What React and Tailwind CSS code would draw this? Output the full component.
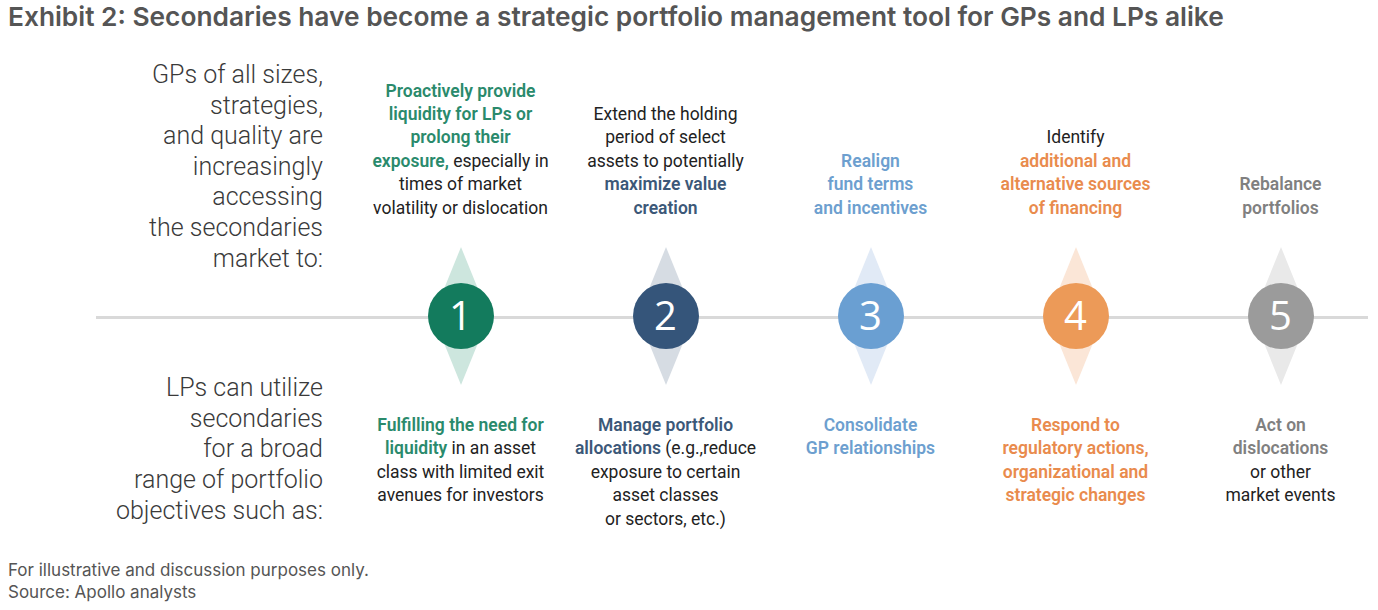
const steps = [
  {
    n: "1",
    circle: "bg-[#137b5d]",
    diamond: "#cde6de",
    top: (
      <>
        <span className="font-semibold text-[#2a8a6c]">
          Proactively provide
          <br />
          liquidity for LPs or
          <br />
          prolong their
          <br />
          exposure,
        </span>{" "}
        especially in
        <br />
        times of market
        <br />
        volatility or dislocation
      </>
    ),
    bottom: (
      <>
        <span className="font-semibold text-[#2a8a6c]">
          Fulfilling the need for
          <br />
          liquidity
        </span>{" "}
        in an asset
        <br />
        class with limited exit
        <br />
        avenues for investors
      </>
    ),
  },
  {
    n: "2",
    circle: "bg-[#35557a]",
    diamond: "#d6dce3",
    top: (
      <>
        Extend the holding
        <br />
        period of select
        <br />
        assets to potentially
        <br />
        <span className="font-semibold text-[#3c5878]">
          maximize value
          <br />
          creation
        </span>
      </>
    ),
    bottom: (
      <>
        <span className="font-semibold text-[#3c5878]">
          Manage portfolio
          <br />
          allocations
        </span>{" "}
        (e.g.,reduce
        <br />
        exposure to certain
        <br />
        asset classes
        <br />
        or sectors, etc.)
      </>
    ),
  },
  {
    n: "3",
    circle: "bg-[#6a9fd2]",
    diamond: "#e1eaf6",
    top: (
      <span className="font-semibold text-[#6d9fcf]">
        Realign
        <br />
        fund terms
        <br />
        and incentives
      </span>
    ),
    bottom: (
      <span className="font-semibold text-[#6d9fcf]">
        Consolidate
        <br />
        GP relationships
      </span>
    ),
  },
  {
    n: "4",
    circle: "bg-[#ec9a58]",
    diamond: "#fbe6d7",
    top: (
      <>
        Identify
        <br />
        <span className="font-semibold text-[#e98b4d]">
          additional and
          <br />
          alternative sources
          <br />
          of financing
        </span>
      </>
    ),
    bottom: (
      <span className="font-semibold text-[#e98b4d]">
        Respond to
        <br />
        regulatory actions,
        <br />
        organizational and
        <br />
        strategic changes
      </span>
    ),
  },
  {
    n: "5",
    circle: "bg-[#9b9b9b]",
    diamond: "#e9e9e9",
    top: (
      <span className="font-semibold text-[#808080]">
        Rebalance
        <br />
        portfolios
      </span>
    ),
    bottom: (
      <>
        <span className="font-semibold text-[#808080]">
          Act on
          <br />
          dislocations
        </span>
        <br />
        or other
        <br />
        market events
      </>
    ),
  },
];

function Marker({ step }) {
  return (
    <div className="relative flex h-[138px] items-center justify-center">
      <svg
        className="absolute left-1/2 top-0 -translate-x-1/2"
        width="56"
        height="138"
        viewBox="0 0 56 138"
      >
        <polygon points="28,0 56,69 28,138 0,69" fill={step.diamond} />
      </svg>
      <div
        className={`relative z-10 flex h-[66px] w-[66px] items-center justify-center rounded-full text-[40px] leading-none text-white ${step.circle}`}
        style={{ fontFamily: '"Open Sans", sans-serif' }}
      >
        <span className="-mt-[2px]">{step.n}</span>
      </div>
    </div>
  );
}

export default function App() {
  const colFont = { fontFamily: "Roboto, sans-serif" };

  return (
    <div
      className="relative h-[610px] w-[1378px] overflow-hidden bg-white text-[#222]"
      style={{ fontFamily: "Inter, sans-serif" }}
    >
      {/* title */}
      <h1 className="h-[40px] whitespace-nowrap pl-[8px] pt-[2px] text-[26.3px] font-semibold leading-[30px] text-[#555]">
        Exhibit 2: Secondaries have become a strategic portfolio management tool for GPs and LPs alike
      </h1>

      {/* body */}
      <div className="relative">
        {/* timeline line */}
        <div className="absolute left-[96px] right-[10px] top-[276px] h-[3px] bg-[#d9d9d9]" />

        <div className="relative grid grid-cols-[358px_repeat(5,205px)] grid-rows-[207px_138px_auto]">
          <div
            className="row-span-3 flex flex-col pr-[35px] pt-[20px] text-right text-[25px] font-light leading-[30.6px] text-[#3a3a3a]"
            style={{ fontFamily: "Roboto, sans-serif" }}
          >
            <p>
              GPs of all sizes,
              <br />
              strategies,
              <br />
              and quality are
              <br />
              increasingly
              <br />
              accessing
              <br />
              the secondaries
              <br />
              market to:
            </p>
            <p className="mt-[99px]">
              LPs can utilize
              <br />
              secondaries
              <br />
              for a broad
              <br />
              range of portfolio
              <br />
              objectives such as:
            </p>
          </div>

          {steps.map((s) => (
            <div
              key={"t" + s.n}
              className="flex flex-col justify-end pb-[27px] text-center text-[17.5px] leading-[23.4px] text-[#222]"
              style={colFont}
            >
              <p>{s.top}</p>
            </div>
          ))}

          {steps.map((s) => (
            <Marker key={"m" + s.n} step={s} />
          ))}

          {steps.map((s) => (
            <div
              key={"b" + s.n}
              className="pt-[29px] text-center text-[17.5px] leading-[23.4px] text-[#222]"
              style={colFont}
            >
              <p>{s.bottom}</p>
            </div>
          ))}
        </div>
      </div>

      {/* footnote */}
      <div className="mt-[28px] pl-[8px] text-[17px] leading-[22px] text-[#555]">
        <p>For illustrative and discussion purposes only.</p>
        <p>Source: Apollo analysts</p>
      </div>
    </div>
  );
}
